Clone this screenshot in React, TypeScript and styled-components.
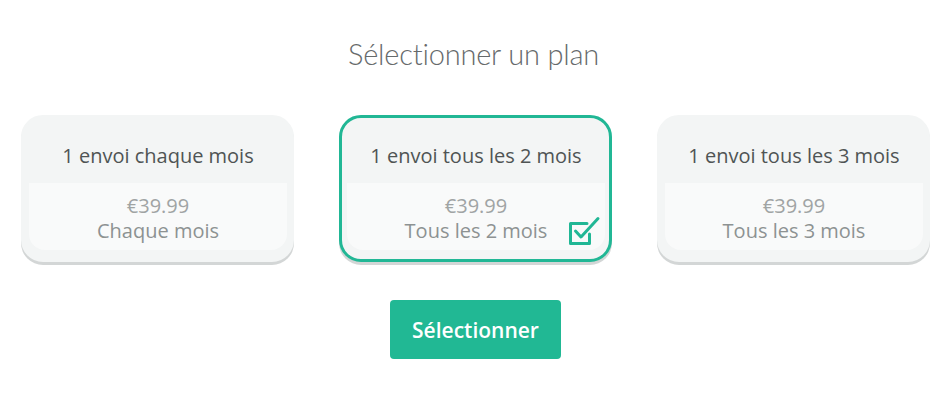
import React, { useState } from "react";
import styled, { createGlobalStyle } from "styled-components";

const Global = createGlobalStyle`
  html, body { margin: 0; padding: 0; background: #fff; }
  body { font-family: "Open Sans", sans-serif; }
`;

const Page = styled.div`
  width: 947px;
  height: 409px;
  display: flex;
  flex-direction: column;
  align-items: center;
`;

const Heading = styled.h1`
  margin: 37px 0 0;
  font-family: Lato, sans-serif;
  font-weight: 300;
  font-size: 29px;
  line-height: 34px;
  color: #666a6b;
  letter-spacing: -0.2px;
`;

const Row = styled.div`
  display: flex;
  gap: 45px;
  margin-top: 44px;
  padding-left: 4px;
`;

const Card = styled.div<{ $active: boolean }>`
  position: relative;
  box-sizing: border-box;
  width: 273px;
  height: 147px;
  border-radius: 22px;
  background: #f3f5f5;
  border: 3px solid ${(p) => (p.$active ? "#21b795" : "#f3f5f5")};
  box-shadow: 0 3px 0 #d3d6d6;
  display: flex;
  flex-direction: column;
  padding: 0 4px 9px 5px;
  cursor: pointer;
`;

const CardTitle = styled.div`
  height: 65px;
  display: flex;
  align-items: center;
  justify-content: center;
  padding-top: 10px;
  box-sizing: border-box;
  font-size: 20px;
  color: #4f5454;
  white-space: nowrap;
`;

const CardBody = styled.div`
  flex: 1;
  background: #f9fafa;
  border-radius: 0 0 16px 16px;
  display: flex;
  flex-direction: column;
  align-items: center;
  padding-top: 10px;
  font-size: 20px;
  line-height: 25px;
  color: #a0a4a4;
`;

const Period = styled.div`
  color: #8d9292;
`;

const Check = styled.svg`
  position: absolute;
  right: 8px;
  bottom: 13px;
`;

const Button = styled.button`
  margin: 38px 0 0 4px;
  width: 171px;
  height: 59px;
  border: none;
  border-radius: 4px;
  background: #21b894;
  color: #fff;
  font-family: "Open Sans", sans-serif;
  font-size: 21px;
  font-weight: 600;
  cursor: pointer;
  padding: 0;
`;

const plans = [
  { title: "1 envoi chaque mois", price: "€39.99", period: "Chaque mois" },
  { title: "1 envoi tous les 2 mois", price: "€39.99", period: "Tous les 2 mois" },
  { title: "1 envoi tous les 3 mois", price: "€39.99", period: "Tous les 3 mois" },
];

export default function App() {
  const [selected, setSelected] = useState(1);
  return (
    <Page>
      <Global />
      <Heading>Sélectionner un plan</Heading>
      <Row>
        {plans.map((p, i) => (
          <Card key={i} $active={selected === i} onClick={() => setSelected(i)}>
            <CardTitle>{p.title}</CardTitle>
            <CardBody>
              <div>{p.price}</div>
              <Period>{p.period}</Period>
            </CardBody>
            {selected === i && (
              <Check width="34" height="30" viewBox="0 0 34 30" fill="none">
                <path
                  d="M20 7.5H3.5V27.5H22.5V18"
                  stroke="#21b795"
                  strokeWidth="3"
                  strokeLinejoin="round"
                  strokeLinecap="round"
                />
                <path
                  d="M8.5 15L14 21L31 2.5"
                  stroke="#21b795"
                  strokeWidth="3"
                  strokeLinejoin="round"
                  strokeLinecap="round"
                />
              </Check>
            )}
          </Card>
        ))}
      </Row>
      <Button>Sélectionner</Button>
    </Page>
  );
}
